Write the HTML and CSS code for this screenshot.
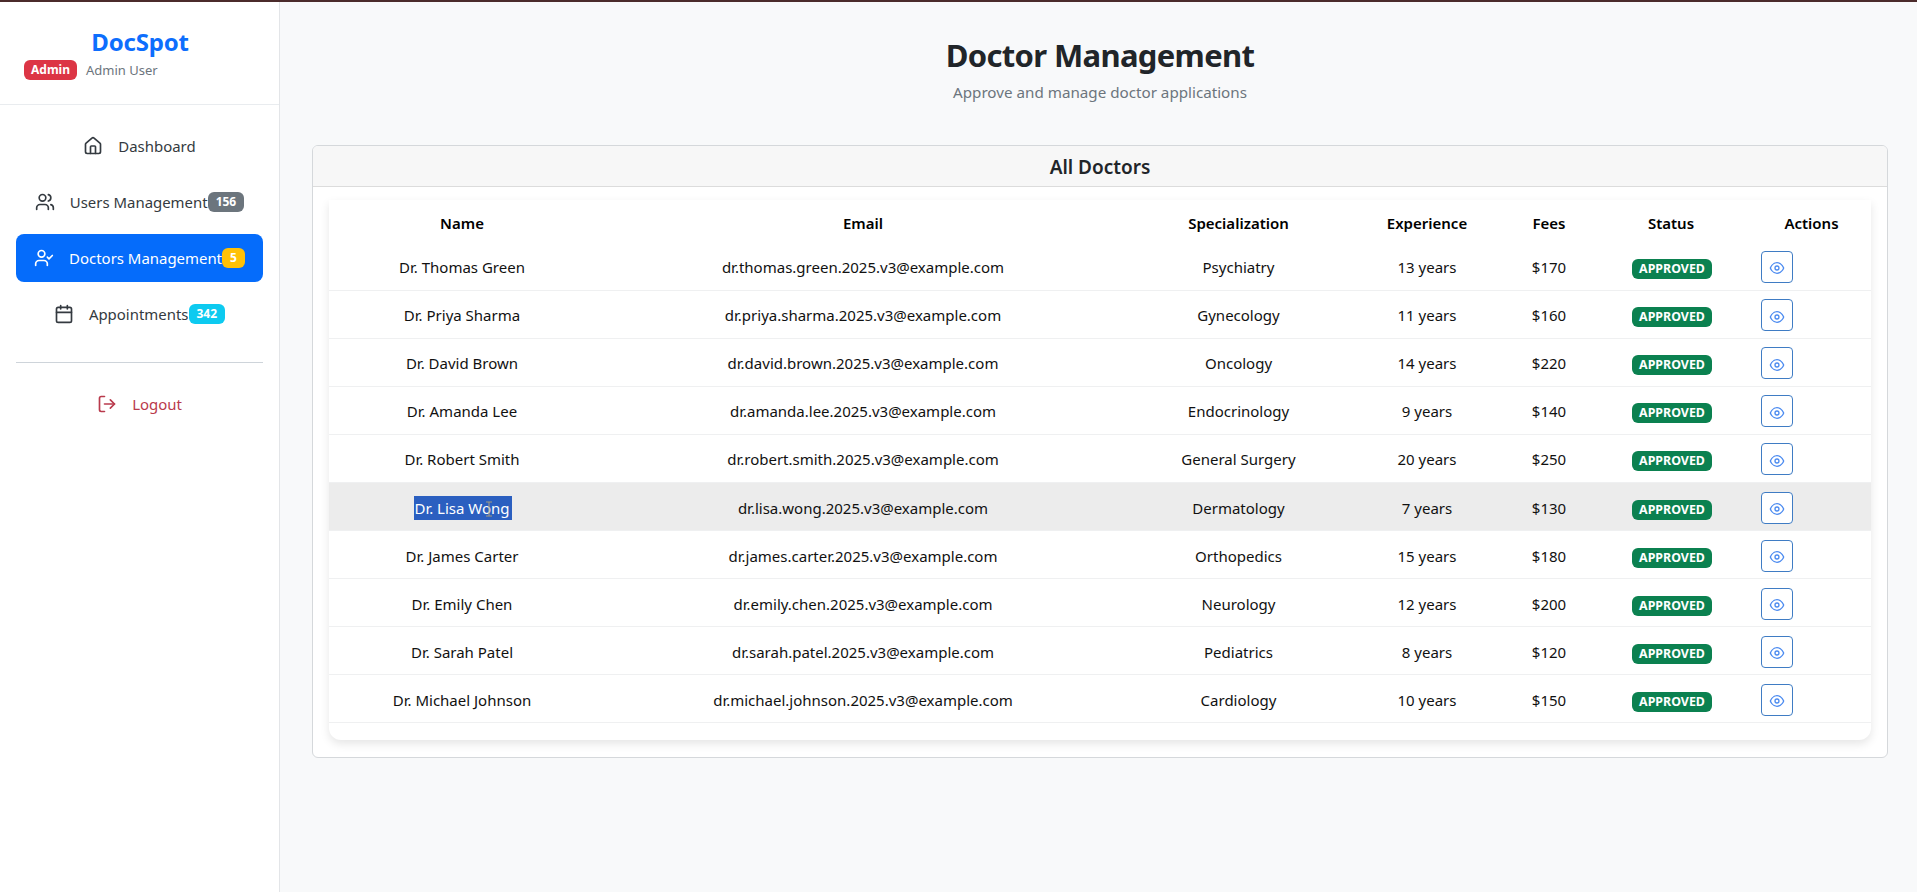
FILE: index.html
```html
<!DOCTYPE html>
<html lang="en">
<head>
<meta charset="utf-8">
<title>Doctor Management</title>
<link rel="stylesheet" href="styles.css">
</head>
<body>
<svg class="defs" width="0" height="0" aria-hidden="true">
  <symbol id="i-house" viewBox="0 0 24 24"><path d="M15 21v-8a1 1 0 0 0-1-1h-4a1 1 0 0 0-1 1v8"/><path d="M3 10a2 2 0 0 1 .709-1.528l7-5.999a2 2 0 0 1 2.582 0l7 5.999A2 2 0 0 1 21 10v9a2 2 0 0 1-2 2H5a2 2 0 0 1-2-2z"/></symbol>
  <symbol id="i-users" viewBox="0 0 24 24"><path d="M16 21v-2a4 4 0 0 0-4-4H6a4 4 0 0 0-4 4v2"/><circle cx="9" cy="7" r="4"/><path d="M22 21v-2a4 4 0 0 0-3-3.87"/><path d="M16 3.13a4 4 0 0 1 0 7.75"/></symbol>
  <symbol id="i-usercheck" viewBox="0 0 24 24"><path d="M16 21v-2a4 4 0 0 0-4-4H6a4 4 0 0 0-4 4v2"/><circle cx="9" cy="7" r="4"/><polyline points="16 11 18 13 22 9"/></symbol>
  <symbol id="i-cal" viewBox="0 0 24 24"><path d="M8 2v4"/><path d="M16 2v4"/><rect width="18" height="18" x="3" y="4" rx="2"/><path d="M3 10h18"/></symbol>
  <symbol id="i-out" viewBox="0 0 24 24"><path d="M9 21H5a2 2 0 0 1-2-2V5a2 2 0 0 1 2-2h4"/><polyline points="16 17 21 12 16 7"/><line x1="21" x2="9" y1="12" y2="12"/></symbol>
  <symbol id="i-eye" viewBox="0 0 24 24"><path d="M2 12s3-8 10-8 10 8 10 8-3 8-10 8-10-8-10-8Z"/><circle cx="12" cy="12" r="3"/></symbol>
</svg>
<div class="app">
  <aside class="sidebar">
    <div class="brand">
      <div class="brand-name">DocSpot</div>
      <div class="brand-user"><span class="role">Admin</span><span class="user">Admin User</span></div>
    </div>
    <nav class="nav">
      <a class="nav-item"><svg class="ico"><use href="#i-house"/></svg><span>Dashboard</span></a>
      <a class="nav-item"><svg class="ico"><use href="#i-users"/></svg><span class="lbl">Users Management</span><span class="pill pill-gray">156</span></a>
      <a class="nav-item active"><svg class="ico"><use href="#i-usercheck"/></svg><span class="lbl">Doctors Management</span><span class="pill pill-yellow">5</span></a>
      <a class="nav-item"><svg class="ico"><use href="#i-cal"/></svg><span class="lbl">Appointments</span><span class="pill pill-cyan">342</span></a>
      <hr class="nav-rule">
      <a class="nav-item logout"><svg class="ico"><use href="#i-out"/></svg><span>Logout</span></a>
    </nav>
  </aside>
  <main class="main">
    <header class="page-head">
      <h1>Doctor Management</h1>
      <p>Approve and manage doctor applications</p>
    </header>
    <section class="card">
      <h2 class="card-head">All Doctors</h2>
      <div class="card-body">
        <div class="table-wrap">
          <table>
            <colgroup>
              <col class="c1"><col class="c2"><col class="c3"><col class="c4"><col class="c5"><col class="c6"><col class="c7">
            </colgroup>
            <thead>
              <tr><th>Name</th><th>Email</th><th>Specialization</th><th>Experience</th><th>Fees</th><th>Status</th><th>Actions</th></tr>
            </thead>
            <tbody>
              <tr><td>Dr. Thomas Green</td><td>dr.thomas.green.2025.v3@example.com</td><td>Psychiatry</td><td>13 years</td><td>$170</td><td><span class="status">APPROVED</span></td><td><button class="view"><svg class="ico-eye"><use href="#i-eye"/></svg></button></td></tr>
              <tr><td>Dr. Priya Sharma</td><td>dr.priya.sharma.2025.v3@example.com</td><td>Gynecology</td><td>11 years</td><td>$160</td><td><span class="status">APPROVED</span></td><td><button class="view"><svg class="ico-eye"><use href="#i-eye"/></svg></button></td></tr>
              <tr><td>Dr. David Brown</td><td>dr.david.brown.2025.v3@example.com</td><td>Oncology</td><td>14 years</td><td>$220</td><td><span class="status">APPROVED</span></td><td><button class="view"><svg class="ico-eye"><use href="#i-eye"/></svg></button></td></tr>
              <tr><td>Dr. Amanda Lee</td><td>dr.amanda.lee.2025.v3@example.com</td><td>Endocrinology</td><td>9 years</td><td>$140</td><td><span class="status">APPROVED</span></td><td><button class="view"><svg class="ico-eye"><use href="#i-eye"/></svg></button></td></tr>
              <tr><td>Dr. Robert Smith</td><td>dr.robert.smith.2025.v3@example.com</td><td>General Surgery</td><td>20 years</td><td>$250</td><td><span class="status">APPROVED</span></td><td><button class="view"><svg class="ico-eye"><use href="#i-eye"/></svg></button></td></tr>
              <tr class="hover"><td><span class="selected">Dr. Lisa Wong<svg class="caret" viewBox="0 0 8 16"><path d="M1 1h6M4 1v14M1 15h6"/></svg></span></td><td>dr.lisa.wong.2025.v3@example.com</td><td>Dermatology</td><td>7 years</td><td>$130</td><td><span class="status">APPROVED</span></td><td><button class="view"><svg class="ico-eye"><use href="#i-eye"/></svg></button></td></tr>
              <tr><td>Dr. James Carter</td><td>dr.james.carter.2025.v3@example.com</td><td>Orthopedics</td><td>15 years</td><td>$180</td><td><span class="status">APPROVED</span></td><td><button class="view"><svg class="ico-eye"><use href="#i-eye"/></svg></button></td></tr>
              <tr><td>Dr. Emily Chen</td><td>dr.emily.chen.2025.v3@example.com</td><td>Neurology</td><td>12 years</td><td>$200</td><td><span class="status">APPROVED</span></td><td><button class="view"><svg class="ico-eye"><use href="#i-eye"/></svg></button></td></tr>
              <tr><td>Dr. Sarah Patel</td><td>dr.sarah.patel.2025.v3@example.com</td><td>Pediatrics</td><td>8 years</td><td>$120</td><td><span class="status">APPROVED</span></td><td><button class="view"><svg class="ico-eye"><use href="#i-eye"/></svg></button></td></tr>
              <tr><td>Dr. Michael Johnson</td><td>dr.michael.johnson.2025.v3@example.com</td><td>Cardiology</td><td>10 years</td><td>$150</td><td><span class="status">APPROVED</span></td><td><button class="view"><svg class="ico-eye"><use href="#i-eye"/></svg></button></td></tr>
            </tbody>
          </table>
        </div>
      </div>
    </section>
  </main>
</div>
</body>
</html>
```

FILE: styles.css
```css
* { box-sizing: border-box; }
html, body { height: 100%; }
body {
  margin: 0;
  background: #f8f9fa;
  color: #212529;
  font-family: "Noto Sans", "Open Sans", sans-serif;
  font-size: 15px;
  overflow: hidden;
}
.defs { position: absolute; }
.app {
  display: flex;
  height: 892px;
  border-top: 2px solid #4b2b2b;
}
.sidebar {
  flex: 0 0 280px;
  background: #fff;
  border-right: 1px solid #e3e5e8;
}
.brand {
  height: 103px;
  padding: 24px 16px 0 24px;
  border-bottom: 1px solid #e9ecef;
}
.brand-name {
  color: #0d6efd;
  font-size: 24px;
  font-weight: 700;
  line-height: 32px;
  text-align: center;
  letter-spacing: -0.2px;
  padding-right: 7px;
}
.brand-user { display: flex; align-items: center; gap: 9px; margin-top: 2px; }
.role {
  background: #dc3545;
  color: #fff;
  font-size: 12px;
  font-weight: 700;
  line-height: 20px;
  height: 20px;
  padding: 0 7px;
  border-radius: 6px;
}
.user { color: #6c757d; font-size: 13px; }
.nav {
  display: flex;
  flex-direction: column;
  gap: 8px;
  padding: 17px 16px 0;
}
.nav-item {
  display: flex;
  align-items: center;
  justify-content: center;
  gap: 15px;
  height: 48px;
  border-radius: 8px;
  font-size: 14.95px;
  color: #343a40;
}
.nav-item .lbl { margin-right: -15px; }
.ico {
  width: 20px;
  height: 20px;
  flex: none;
  fill: none;
  stroke: currentColor;
  stroke-width: 2;
  stroke-linecap: round;
  stroke-linejoin: round;
}
.active { background: #056cfb; color: #fff; }
.pill {
  color: #fff;
  font-size: 12px;
  font-weight: 700;
  line-height: 20px;
  padding: 0 8px;
  border-radius: 6px;
}
.pill-gray { background: #6c757d; }
.pill-yellow { background: #ffc107; }
.pill-cyan { background: #0dcaf0; }
.nav-rule {
  width: 100%;
  margin: 16px 0 9px;
  border: 0;
  border-top: 1px solid #ced4da;
}
.logout { color: #b93a4c; }
.main {
  flex: 1;
  padding: 0 29px 0 32px;
}
.page-head { height: 143px; padding-top: 31px; text-align: center; }
.page-head h1 {
  margin: 0;
  font-size: 31px;
  font-weight: 700;
  line-height: 44px;
  letter-spacing: -0.65px;
}
.page-head p {
  margin: 3px 0 0;
  color: #6c757d;
  font-size: 15.2px;
  line-height: 24px;
}
.card {
  background: #fff;
  border: 1px solid #d5d8db;
  border-radius: 6px;
  overflow: hidden;
}
.card-head {
  margin: 0;
  height: 41px;
  background: #f7f7f7;
  border-bottom: 1px solid #dcdcdc;
  font-size: 19px;
  font-weight: 600;
  line-height: 42px;
  text-align: center;
}
.card-body { padding: 13px 16px 17px; }
.table-wrap {
  border-radius: 0 0 12px 12px;
  background: #fff;
  box-shadow: 0 4px 10px rgba(0, 0, 0, 0.1);
  padding-bottom: 17px;
}
table {
  width: 100%;
  table-layout: fixed;
  border-collapse: collapse;
}
.c1 { width: 266px; } .c2 { width: 536px; } .c3 { width: 215px; } .c4 { width: 162px; }
.c5 { width: 82px; } .c6 { width: 162px; } .c7 { width: 119px; }
th {
  height: 42px;
  padding: 3px 0 0;
  color: #000;
  font-size: 15px;
  font-weight: 600;
  text-align: center;
}
td {
  height: 48.1px;
  padding: 2px 0 0;
  text-align: center;
  vertical-align: middle;
  border-bottom: 1px solid #eff0f1;
  color: #111;
}
.hover td { background: #ececec; }
.selected {
  position: relative;
  left: 1px;
  display: inline-block;
  background: #2b5fc0;
  color: #fff;
  line-height: 24px;
  padding-right: 2px;
}
.caret {
  position: absolute;
  left: 71px;
  top: 5px;
  width: 8px;
  height: 16px;
  fill: none;
  stroke: #a59c7e;
  stroke-width: 1;
}
.status {
  display: inline-block;
  position: relative;
  left: 1px;
  top: 1px;
  background: #0b8150;
  color: #fff;
  font-size: 12.4px;
  font-weight: 700;
  line-height: 20px;
  height: 20px;
  padding: 0 7px;
  border-radius: 6px;
  vertical-align: middle;
}
.view {
  display: flex;
  align-items: center;
  justify-content: center;
  width: 32px;
  height: 32px;
  margin: 0 0 0 9px;
  padding: 3px 0 0;
  background: #fff;
  border: 1px solid #3f7cc4;
  border-radius: 4px;
}
.ico-eye {
  width: 16px;
  height: 16px;
  fill: none;
  stroke: #4c8bf0;
  stroke-width: 2;
  stroke-linecap: round;
  stroke-linejoin: round;
}
```
